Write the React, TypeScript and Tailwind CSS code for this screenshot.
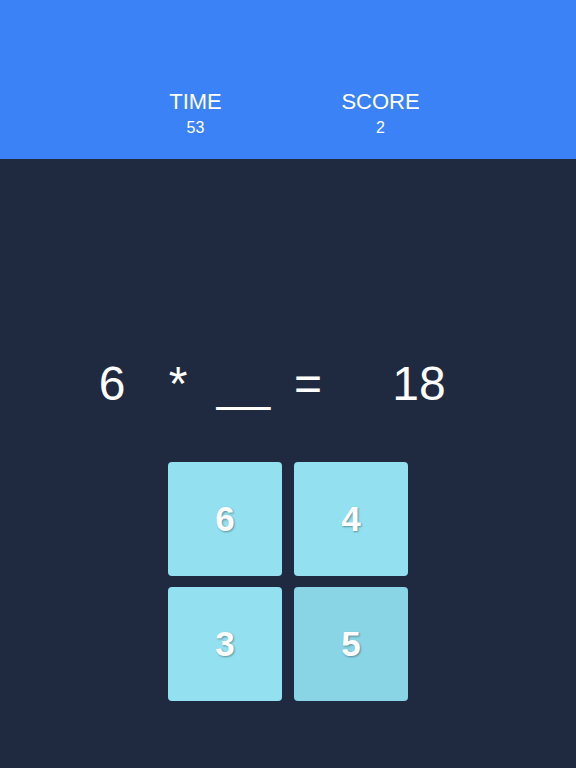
const tiles = [
  { value: 6, active: false },
  { value: 4, active: false },
  { value: 3, active: false },
  { value: 5, active: true },
];

export default function App() {
  return (
    <div className="min-h-screen bg-[#1f2a40] font-['Liberation_Sans',Arial,sans-serif] text-white">
      {/* stats bar */}
      <header className="h-[159px] bg-[#3b82f6] pt-[88px]">
        <div className="flex justify-center">
          <div className="w-[185px] text-center">
            <div className="text-[22px] leading-[28px]">TIME</div>
            <div className="text-base leading-6">53</div>
          </div>
          <div className="w-[185px] text-center">
            <div className="text-[22px] leading-[28px]">SCORE</div>
            <div className="text-base leading-6">2</div>
          </div>
        </div>
      </header>

      {/* equation */}
      <div className="mt-[201px] flex pl-[80px] text-5xl leading-none">
        <span className="w-16 text-center">6</span>
        <span className="w-[68px] text-center">*</span>
        <span className="w-[63px] text-center">__</span>
        <span className="w-[66px] text-center">=</span>
        <span className="ml-[46px] w-16 text-center">18</span>
      </div>

      {/* answer choices */}
      <div className="mx-auto mt-[54px] grid w-fit grid-cols-2 gap-x-3 gap-y-[11px]">
        {tiles.map((t) => (
          <button
            key={t.value}
            className={`flex h-[114px] w-[114px] items-center justify-center rounded-sm text-[35px] font-bold text-white [text-shadow:1px_1px_2px_rgba(0,0,0,0.35)] ${
              t.active ? 'bg-[#89d5e6]' : 'bg-[#93e0f0]'
            }`}
          >
            {t.value}
          </button>
        ))}
      </div>
    </div>
  );
}
